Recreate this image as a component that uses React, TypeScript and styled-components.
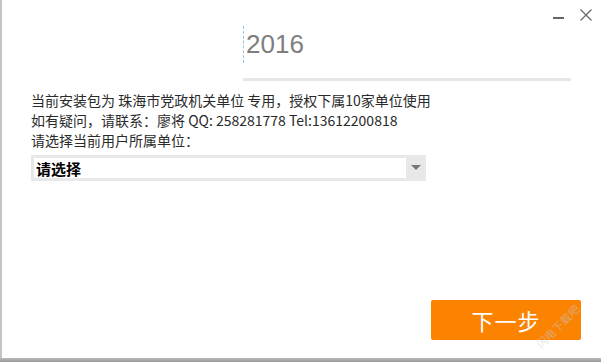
import styled, { createGlobalStyle } from "styled-components";

const GlobalStyle = createGlobalStyle`
  html, body {
    margin: 0;
    padding: 0;
    background: #ffffff;
  }
  body {
    font-family: "Noto Sans CJK SC", "Noto Sans", sans-serif;
  }
`;

const Frame = styled.div`
  width: 601px;
  height: 362px;
  display: flex;
  flex-direction: column;
  overflow: hidden;
`;
const Window = styled.div`
  position: relative;
  flex: 1;
  display: flex;
  flex-direction: column;
  background: #ffffff;
  border-left: 2px solid #c4c4c4;
`;
const Shadow = styled.div`
  height: 4px;
  background: linear-gradient(#b8b8b8, #9a9a9a);
`;
const TitleBar = styled.div`
  height: 26px;
  display: flex;
  justify-content: flex-end;
  align-items: flex-start;
  padding-right: 9px;
  gap: 15px;
`;
const CtrlBtn = styled.button`
  width: 12px;
  height: 12px;
  margin-top: 9px;
  padding: 0;
  border: none;
  background: none;
  display: flex;
  align-items: center;
  justify-content: center;
`;
const Header = styled.div`
  margin-left: 241px;
  width: 328px;
  display: flex;
  flex-direction: column;
`;
const Year = styled.div`
  height: 37px;
  display: flex;
  align-items: center;
  border-left: 1px dashed #8fc8ee;
  padding-left: 2px;
  font-family: "Liberation Sans", Arial, sans-serif;
  font-size: 26px;
  font-weight: 300;
  color: #7e7e7e;
`;
const Divider = styled.div`
  height: 3px;
  margin-top: 15px;
  background: #e6e6e6;
`;
const Body = styled.div`
  flex: 1;
  padding-left: 29px;
  margin-top: 9px;
  display: flex;
  flex-direction: column;
`;
const Line = styled.div`
  font-size: 14px;
  line-height: 20px;
  color: #2a2a2a;
  white-space: nowrap;
`;
const Select = styled.div`
  margin-top: 5px;
  width: 395px;
  height: 26px;
  box-sizing: border-box;
  display: flex;
  background: #e6e8e9;
  padding: 3px 0 3px 3px;
`;
const SelectValue = styled.div`
  flex: 1;
  background: #ffffff;
  display: flex;
  align-items: center;
  padding-left: 2px;
  font-size: 15px;
  font-weight: 700;
  color: #000000;
`;
const Arrow = styled.div`
  width: 20px;
  display: flex;
  align-items: center;
  justify-content: center;
`;
const Footer = styled.div`
  display: flex;
  justify-content: flex-end;
  padding: 0 20px 18px 0;
`;
const NextButton = styled.button`
  width: 150px;
  height: 40px;
  border: none;
  border-radius: 2px;
  background: #fb8300;
  color: #ffffff;
  font-family: "Noto Sans CJK SC", sans-serif;
  font-size: 22px;
  font-weight: 400;
  letter-spacing: 1px;
  cursor: pointer;
`;
const Watermark = styled.div`
  position: absolute;
  right: 16px;
  bottom: 24px;
  transform: rotate(-45deg);
  font-size: 11px;
  color: rgba(200, 200, 210, 0.55);
  pointer-events: none;
  white-space: nowrap;
`;

export default function App() {
  return (
    <>
      <GlobalStyle />
      <Frame>
        <Window>
          <TitleBar>
            <CtrlBtn aria-label="minimize">
              <svg width="12" height="12" viewBox="0 0 12 12">
                <rect x="0" y="8" width="11" height="2" fill="#666" />
              </svg>
            </CtrlBtn>
            <CtrlBtn aria-label="close">
              <svg width="12" height="12" viewBox="0 0 12 12">
                <path d="M0.5 0.5 L11.5 11.5 M11.5 0.5 L0.5 11.5" stroke="#666" strokeWidth="1.2" />
              </svg>
            </CtrlBtn>
          </TitleBar>
          <Header>
            <Year>2016</Year>
            <Divider />
          </Header>
          <Body>
            <Line>当前安装包为 珠海市党政机关单位 专用，授权下属10家单位使用</Line>
            <Line>如有疑问，请联系：廖将 QQ: 258281778 Tel:13612200818</Line>
            <Line>请选择当前用户所属单位：</Line>
            <Select>
              <SelectValue>请选择</SelectValue>
              <Arrow>
                <svg width="10" height="6" viewBox="0 0 10 6">
                  <path d="M0 0 H10 L5 5 Z" fill="#777" />
                </svg>
              </Arrow>
            </Select>
          </Body>
          <Footer>
            <NextButton>下一步</NextButton>
          </Footer>
          <Watermark>闪电下载吧</Watermark>
        </Window>
        <Shadow />
      </Frame>
    </>
  );
}
